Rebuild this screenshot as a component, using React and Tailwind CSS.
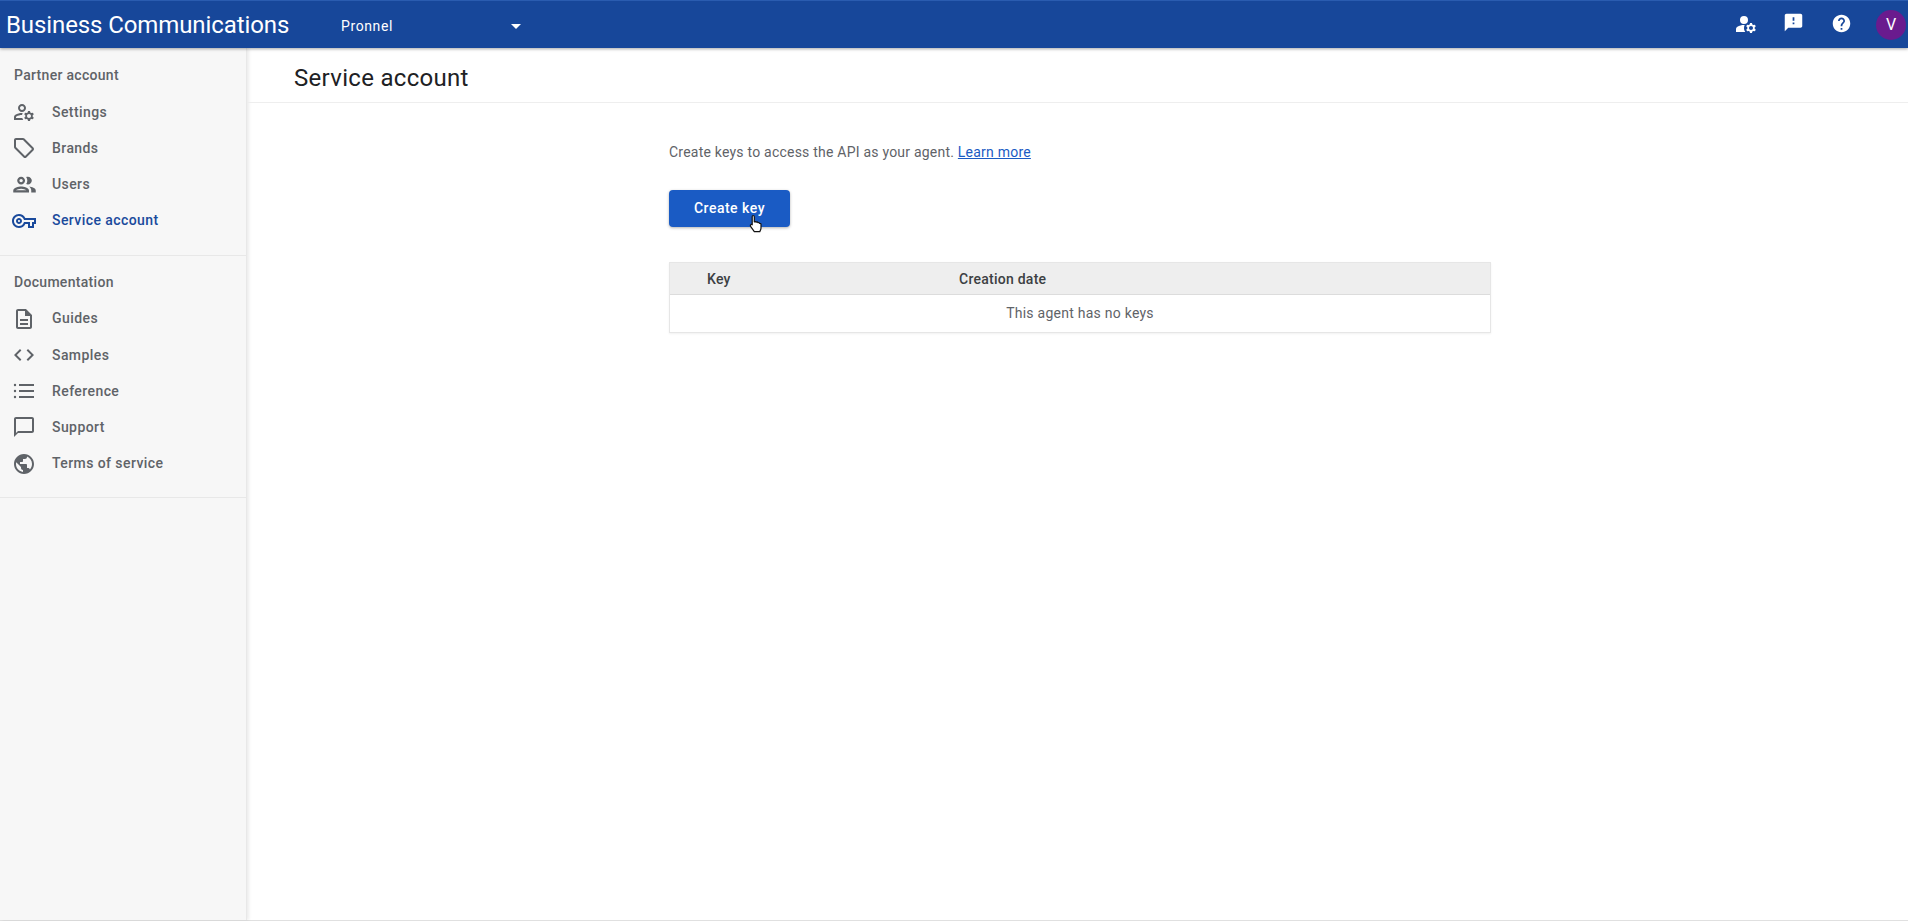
import React from "react";

const PATHS = {
  settings:
    "M4 18v-.65c0-.34.16-.66.41-.81C6.1 15.53 8.03 15 10 15c.03 0 .05 0 .08.01.1-.7.3-1.37.59-1.98-.22-.02-.44-.03-.67-.03-2.42 0-4.68.67-6.61 1.82-.88.52-1.39 1.5-1.39 2.53V20h9.26c-.42-.6-.75-1.28-.97-2H4zm6-6c2.21 0 4-1.79 4-4s-1.79-4-4-4-4 1.79-4 4 1.79 4 4 4zm0-6c1.1 0 2 .9 2 2s-.9 2-2 2-2-.9-2-2 .9-2 2-2zm10.75 10c0-.22-.03-.42-.06-.63l1.14-1.01-1-1.73-1.45.49c-.32-.27-.68-.48-1.08-.63L18 11h-2l-.3 1.49c-.4.15-.76.36-1.08.63l-1.45-.49-1 1.73 1.14 1.01c-.03.21-.06.41-.06.63s.03.42.06.63l-1.14 1.01 1 1.73 1.45-.49c.32.27.68.48 1.08.63L16 21h2l.3-1.49c.4-.15.76-.36 1.08-.63l1.45.49 1-1.73-1.14-1.01c.03-.21.06-.41.06-.63zM17 18c-1.1 0-2-.9-2-2s.9-2 2-2 2 .9 2 2-.9 2-2 2z",
  tag: "M21.41 11.58l-9-9C12.05 2.22 11.55 2 11 2H4c-1.1 0-2 .9-2 2v7c0 .55.22 1.05.59 1.42l9 9c.36.36.86.58 1.41.58s1.05-.22 1.41-.59l7-7c.37-.36.59-.86.59-1.41s-.23-1.06-.59-1.42zM13 20.01L4 11V4h7v-.01l9 9-7 7.02z",
  users:
    "M9 13.75c-2.34 0-7 1.17-7 3.5V19h14v-1.75c0-2.33-4.66-3.5-7-3.5zM4.34 17c.84-.58 2.87-1.25 4.66-1.25s3.82.67 4.66 1.25H4.34zM9 12c1.93 0 3.5-1.57 3.5-3.5S10.93 5 9 5 5.5 6.57 5.5 8.5 7.07 12 9 12zm0-5c.83 0 1.5.67 1.5 1.5S9.83 10 9 10s-1.5-.67-1.5-1.5S8.17 7 9 7zm7.04 6.81c1.16.84 1.96 1.96 1.96 3.44V19h4v-1.75c0-2.02-3.5-3.17-5.96-3.44zM15 12c1.93 0 3.5-1.57 3.5-3.5S16.93 5 15 5c-.54 0-1.04.13-1.5.35.63.89 1 1.98 1 3.15s-.37 2.26-1 3.15c.46.22.96.35 1.5.35z",
  key: "M22 19h-6v-4h-2.68c-1.14 2.42-3.6 4-6.32 4-3.86 0-7-3.14-7-7s3.14-7 7-7c2.72 0 5.17 1.58 6.32 4H24v6h-2v4zm-4-2h2v-4h2v-2H11.94l-.23-.67C11.01 8.34 9.11 7 7 7c-2.76 0-5 2.24-5 5s2.24 5 5 5c2.11 0 4.01-1.34 4.71-3.33l.23-.67H18v4zM7 15c-1.65 0-3-1.35-3-3s1.35-3 3-3 3 1.35 3 3-1.35 3-3 3zm0-4c-.55 0-1 .45-1 1s.45 1 1 1 1-.45 1-1-.45-1-1-1z",
  guides:
    "M8 16h8v2H8zm0-4h8v2H8zm6-10H6c-1.1 0-2 .9-2 2v16c0 1.1.89 2 1.99 2H18c1.1 0 2-.9 2-2V8l-6-6zm4 18H6V4h7v5h5v11z",
  code: "M9.4 16.6L4.8 12l4.6-4.6L8 6l-6 6 6 6 1.4-1.4zm5.2 0l4.6-4.6-4.6-4.6L16 6l6 6-6 6-1.4-1.4z",
  list: "M3 4.8a1.2 1.2 0 1 0 0 2.4 1.2 1.2 0 0 0 0-2.4zm0 6a1.2 1.2 0 1 0 0 2.4 1.2 1.2 0 0 0 0-2.4zm0 6a1.2 1.2 0 1 0 0 2.4 1.2 1.2 0 0 0 0-2.4zM7 19h15v-2H7v2zm0-6h15v-2H7v2zm0-8v2h15V5H7z",
  support:
    "M20 2H4c-1.1 0-2 .9-2 2v18l4-4h14c1.1 0 2-.9 2-2V4c0-1.1-.9-2-2-2zm0 14H6l-2 2V4h16v12z",
  globe:
    "M12 2C6.48 2 2 6.48 2 12s4.48 10 10 10 10-4.48 10-10S17.52 2 12 2zm-1 17.93c-3.95-.49-7-3.85-7-7.93 0-.62.08-1.21.21-1.79L9 15v1c0 1.1.9 2 2 2v1.93zm6.9-2.54c-.26-.81-1-1.39-1.9-1.39h-1v-3c0-.55-.45-1-1-1H8v-2h2c.55 0 1-.45 1-1V7h2c1.1 0 2-.9 2-2v-.41c2.93 1.19 5 4.06 5 7.41 0 2.08-.8 3.97-2.1 5.39z",
  accountFilled:
    "M10.67 13.02c-.22-.01-.44-.02-.67-.02-2.42 0-4.68.67-6.61 1.82-.88.52-1.39 1.5-1.39 2.53V20h9.26c-.79-1.13-1.26-2.51-1.26-4 0-1.07.25-2.07.67-2.98zM10 12a4 4 0 1 0 0-8 4 4 0 0 0 0 8zm10.75 4c0-.22-.03-.42-.06-.63l1.14-1.01-1-1.73-1.45.49c-.32-.27-.68-.48-1.08-.63L18 11h-2l-.3 1.49c-.4.15-.76.36-1.08.63l-1.45-.49-1 1.73 1.14 1.01c-.03.21-.06.41-.06.63s.03.42.06.63l-1.14 1.01 1 1.73 1.45-.49c.32.27.68.48 1.08.63L16 21h2l.3-1.49c.4-.15.76-.36 1.08-.63l1.45.49 1-1.73-1.14-1.01c.03-.21.06-.41.06-.63zM17 18c-1.1 0-2-.9-2-2s.9-2 2-2 2 .9 2 2-.9 2-2 2z",
  feedback:
    "M20 2H4c-1.1 0-1.99.9-1.99 2L2 22l4-4h14c1.1 0 2-.9 2-2V4c0-1.1-.9-2-2-2zm-7 12h-2v-2h2v2zm0-4h-2V6h2v4z",
  help: "M12 2C6.48 2 2 6.48 2 12s4.48 10 10 10 10-4.48 10-10S17.52 2 12 2zm1 17h-2v-2h2v2zm2.07-7.75l-.9.92C13.45 12.9 13 13.5 13 15h-2v-.5c0-1.1.45-2.1 1.17-2.83l1.24-1.26c.37-.36.59-.86.59-1.41 0-1.1-.9-2-2-2s-2 .9-2 2H8c0-2.21 1.79-4 4-4s4 1.79 4 4c0 .88-.36 1.68-.93 2.25z",
};

function Icon({ name, className }) {
  return (
    <svg viewBox="0 0 24 24" fill="currentColor" className={className}>
      <path d={PATHS[name]} />
    </svg>
  );
}

function NavItem({ icon, label, active, big }) {
  return (
    <div
      className={`flex h-[36.2px] items-center pl-[12px] ${
        active ? "text-[#1a4a9c]" : "text-[#5f6368]"
      }`}
    >
      <div className="flex h-6 w-6 shrink-0 items-center justify-center">
        <Icon
          name={icon}
          className={big ? "h-[27px] w-[27px] shrink-0" : "h-6 w-6 shrink-0"}
        />
      </div>
      <span className="ml-[16px] text-[14px] font-medium tracking-[0.42px]">
        {label}
      </span>
    </div>
  );
}

function NavHeading({ children }) {
  return (
    <div className="flex h-[37px] items-center pl-[14px] text-[14px] font-medium tracking-[0.3px] text-[#5f6368]">
      {children}
    </div>
  );
}

function App() {
  return (
    <div className="flex h-screen flex-col overflow-hidden bg-white font-['Roboto',sans-serif]">
      <header className="z-10 flex h-[48px] shrink-0 items-center border-t border-[#2a5cb0] bg-[#17479a] pr-[2px] text-white shadow-[0_1px_3px_rgba(0,0,0,0.35)]">
        <div className="w-[341px] pl-[6px] pt-[1px] text-[24px] leading-none tracking-[-0.1px]">
          Business Communications
        </div>
        <div className="pt-[3px] text-[14px] tracking-[0.6px]">Pronnel</div>
        <div className="ml-[118px] mt-[3px] h-0 w-0 border-x-[5px] border-t-[5px] border-x-transparent border-t-white" />
        <div className="ml-auto flex items-center">
          <Icon name="accountFilled" className="mb-[2px] h-[24px] w-[24px]" />
          <Icon name="feedback" className="ml-[25px] mb-[4px] h-[21px] w-[21px]" />
          <Icon name="help" className="ml-[27px] mb-[2px] h-[21px] w-[21px]" />
          <div className="ml-[24px] flex h-[30px] w-[30px] items-center justify-center rounded-full bg-[#6a1b8e] text-[16px]">
            V
          </div>
        </div>
      </header>

      <div className="flex min-h-0 flex-1 border-b border-[#e0e0e0]">
        <aside className="w-[247px] shrink-0 border-r border-[#e8e8e8] bg-[#f7f7f7] shadow-[2px_0_3px_rgba(0,0,0,0.08)]">
          <div className="border-b border-[#e8e8e8] pt-[9px] pb-[16px]">
            <NavHeading>Partner account</NavHeading>
            <NavItem icon="settings" label="Settings" />
            <NavItem icon="tag" label="Brands" />
            <NavItem icon="users" label="Users" big />
            <NavItem icon="key" label="Service account" active />
          </div>
          <div className="border-b border-[#e8e8e8] pt-[8px] pb-[15px]">
            <NavHeading>Documentation</NavHeading>
            <NavItem icon="guides" label="Guides" />
            <NavItem icon="code" label="Samples" />
            <NavItem icon="list" label="Reference" />
            <NavItem icon="support" label="Support" />
            <NavItem icon="globe" label="Terms of service" />
          </div>
        </aside>

        <main className="min-w-0 flex-1">
          <div className="flex h-[55px] items-center border-b border-[#eeeeee] pl-[47px] pt-[6px] text-[24px] leading-none tracking-[0.3px] text-[#202124]">
            Service account
          </div>
          <div className="pl-[422px] pt-[39px]">
            <p className="text-[14px] leading-[20px] tracking-[0.22px] text-[#5f6368]">
              Create keys to access the API as your agent.{" "}
              <a className="text-[#1a5bc4] underline">Learn more</a>
            </p>
            <div className="relative mt-[28px] w-[121px]">
              <button
                type="button"
                className="flex h-[37px] w-[121px] items-center justify-center rounded-[4px] bg-[#1a5bc4] text-[14px] font-medium tracking-[0.5px] text-white shadow-[0_1px_3px_rgba(0,0,0,0.3)]"
              >
                Create key
              </button>
              <svg
                viewBox="0 0 16 20"
                className="absolute left-[79px] top-[24px] h-[20px] w-[16px]"
              >
                <path
                  d="M5 1.5c.8 0 1.3.6 1.3 1.3v5l1-.2c.5 0 1 .2 1.2.5.5-.2 1.2 0 1.5.5.6-.2 1.3.1 1.5.7.8-.1 1.5.4 1.5 1.2v3.4c0 1-.3 1.8-.8 2.7l-.4 1.1H6.3l-3.7-5.4c-.5-.8-.2-1.5.4-1.8.5-.2 1 0 1.2.3V2.8c0-.7.3-1.3.8-1.3z"
                  fill="#fff"
                  stroke="#111"
                  strokeWidth="1.2"
                  strokeLinejoin="round"
                />
              </svg>
            </div>
            <div className="mt-[35px] w-[822px] border border-[#e6e6e6] shadow-[0_1px_2px_rgba(0,0,0,0.06)]">
              <div className="flex h-[32px] items-center border-b border-[#dcdcdc] bg-[#eeeeee] pt-[2px] text-[14px] font-medium tracking-[0.25px] text-[#3c4043]">
                <div className="w-[289px] pl-[37px]">Key</div>
                <div>Creation date</div>
              </div>
              <div className="flex h-[37px] items-center justify-center text-[14px] tracking-[0.25px] text-[#5f6368]">
                This agent has no keys
              </div>
            </div>
          </div>
        </main>
      </div>
    </div>
  );
}

export default App;
